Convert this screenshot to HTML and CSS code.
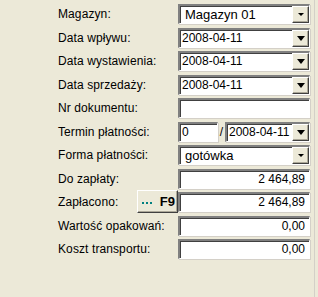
FILE: index.html
```html
<!DOCTYPE html>
<html>
    <head>
        <title>Dokument</title>
        <meta name="viewport" content="width=device-width, initial-scale=1">
        <link rel="stylesheet" href="styles.css">
    </head>
    <body>
        <div class="panel">
            <div class="form">
                <div class="row">
                    <label>Magazyn:</label>
                    <div class="combo big"><span class="value">Magazyn 01</span><span class="drop small"><i></i></span></div>
                </div>
                <div class="row">
                    <label>Data wpływu:</label>
                    <div class="combo"><span class="value">2008-04-11</span><span class="drop"><i></i></span></div>
                </div>
                <div class="row">
                    <label>Data wystawienia:</label>
                    <div class="combo"><span class="value">2008-04-11</span><span class="drop"><i></i></span></div>
                </div>
                <div class="row">
                    <label>Data sprzedaży:</label>
                    <div class="combo"><span class="value">2008-04-11</span><span class="drop"><i></i></span></div>
                </div>
                <div class="row">
                    <label>Nr dokumentu:</label>
                    <div class="field"></div>
                </div>
                <div class="row">
                    <label>Termin płatności:</label>
                    <div class="split">
                        <div class="field days">0</div>
                        <span class="slash">/</span>
                        <div class="combo"><span class="value">2008-04-11</span><span class="drop"><i></i></span></div>
                    </div>
                </div>
                <div class="row">
                    <label>Forma płatności:</label>
                    <div class="combo big"><span class="value">gotówka</span><span class="drop small"><i></i></span></div>
                </div>
                <div class="row">
                    <label>Do zapłaty:</label>
                    <div class="field num">2 464,89</div>
                </div>
                <div class="row">
                    <label>Zapłacono:</label>
                    <div class="with-btn">
                        <button class="f9"><span class="dots"><b></b><b></b><b></b></span>F9</button>
                        <div class="field num">2 464,89</div>
                    </div>
                </div>
                <div class="row">
                    <label>Wartość opakowań:</label>
                    <div class="field num">0,00</div>
                </div>
                <div class="row">
                    <label>Koszt transportu:</label>
                    <div class="field num">0,00</div>
                </div>
            </div>
        </div>
    </body>
</html>
```

FILE: styles.css
```css
* {
    box-sizing: border-box;
}
body {
    margin: 0;
    background-color: #ece9d8;
    font-family: "Liberation Sans", Arial, sans-serif;
    font-size: 12px;
    color: #000;
}
.panel {
    width: 315px;
    height: 297px;
    border-right: 1px solid #d4d0c8;
    padding: 4px 0 0 58px;
    display: flex;
}
.form {
    width: 253px;
    display: flex;
    flex-direction: column;
}
.row {
    height: 23.5px;
    display: grid;
    grid-template-columns: 120px 132px;
    align-items: start;
}
.row label {
    white-space: nowrap;
    line-height: 20px;
    letter-spacing: 0.1px;
}
.field, .combo {
    height: 20px;
    background-color: #fff;
    border-top: 2px solid #808080;
    border-left: 2px solid #808080;
    border-bottom: 1px solid #fff;
    border-right: 1px solid #fff;
    box-shadow: inset 1px 1px 0 #404040, 1px 1px 0 #d4d0c8;
    line-height: 17px;
    padding: 0 2px;
    white-space: nowrap;
    overflow: hidden;
}
.combo {
    display: flex;
    padding: 0 0 0 2px;
}
.combo .value {
    flex: 1;
}
.combo.big {
    font-size: 13px;
    padding-left: 5px;
}
.drop {
    width: 17px;
    height: 17px;
    background-color: #ece9d8;
    border-top: 1px solid #fff;
    border-left: 1px solid #fff;
    border-bottom: 1px solid #404040;
    border-right: 1px solid #404040;
    box-shadow: inset -1px -1px 0 #aca899;
    display: flex;
    align-items: center;
    justify-content: center;
}
.drop i {
    width: 0;
    height: 0;
    border-left: 4px solid transparent;
    border-right: 4px solid transparent;
    border-top: 5px solid #000;
}
.drop.small i {
    border-left-width: 3px;
    border-right-width: 3px;
    border-top-width: 3px;
}
.num {
    text-align: right;
    padding-right: 4px;
}
.split {
    display: flex;
    align-items: start;
}
.split .days {
    width: 40px;
}
.slash {
    width: 7px;
    text-align: center;
    line-height: 20px;
}
.split .combo {
    flex: 1;
}
.with-btn {
    display: flex;
    margin-left: -41px;
    align-items: start;
}
.with-btn .field {
    flex: 1;
}
.f9 {
    width: 41px;
    height: 23px;
    margin-top: -2px;
    padding: 0 2px 0 4px;
    font-family: inherit;
    font-size: 13px;
    font-weight: bold;
    background-color: #ece9d8;
    border-top: 1px solid #fff;
    border-left: 1px solid #fff;
    border-bottom: 1px solid #404040;
    border-right: 1px solid #404040;
    box-shadow: inset -1px -1px 0 #aca899;
    display: flex;
    align-items: center;
    justify-content: space-between;
}
.dots {
    display: flex;
    gap: 2px;
    margin-top: 3px;
}
.dots b {
    width: 2px;
    height: 2px;
    background-color: #008080;
}
```
